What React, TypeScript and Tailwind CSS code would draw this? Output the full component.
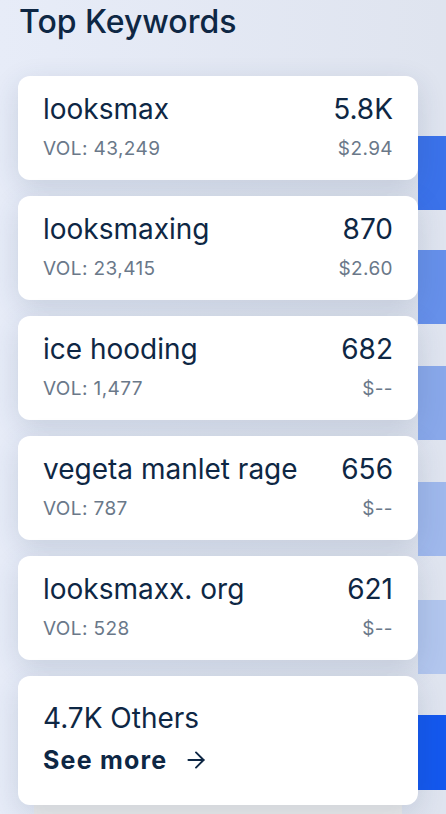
import { ArrowRight } from "lucide-react";

type Keyword = {
	term: string;
	score: string;
	vol: string;
	cpc: string;
};

const keywords: Keyword[] = [
	{ term: "looksmax", score: "5.8K", vol: "43,249", cpc: "$2.94" },
	{ term: "looksmaxing", score: "870", vol: "23,415", cpc: "$2.60" },
	{ term: "ice hooding", score: "682", vol: "1,477", cpc: "$--" },
	{ term: "vegeta manlet rage", score: "656", vol: "787", cpc: "$--" },
	{ term: "looksmaxx. org", score: "621", vol: "528", cpc: "$--" },
];

function KeywordCard({ k }: { k: Keyword }) {
	return (
		<div className="h-[104px] rounded-[12px] bg-white px-[25px] pt-[13px] shadow-[0_8px_28px_rgba(40,60,100,0.16)]">
			<div className="flex items-baseline justify-between text-[28px] leading-[40px] text-[#0e2744]">
				<span>{k.term}</span>
				<span>{k.score}</span>
			</div>
			<div className="mt-[8px] flex justify-between text-[19px] leading-[24px] tracking-[0.4px] text-[#6a7889]">
				<span>VOL: {k.vol}</span>
				<span>{k.cpc}</span>
			</div>
		</div>
	);
}

export default function App() {
	return (
		<div
			className="relative h-[814px] w-[446px] overflow-hidden bg-gradient-to-r from-[#e7ecf8] to-[#dfe4ef]"
			style={{ fontFamily: "Inter, 'Noto Sans', sans-serif" }}
		>
			{/* chart bars peeking out behind the cards */}
			<div className="absolute left-[418px] top-0 flex w-[28px] flex-col pt-[136px]">
				<div className="h-[74px] bg-[#3b72ea]" />
				<div className="mt-[40px] h-[74px] bg-[#6690ea]" />
				<div className="mt-[42px] h-[74px] bg-[#89a8ea]" />
				<div className="mt-[42px] h-[74px] bg-[#9fb8ec]" />
				<div className="mt-[44px] h-[74px] bg-[#b2c6ee]" />
				<div className="mt-[41px] h-[75px] bg-[#1458ee]" />
			</div>

			<div className="relative px-[18px] pr-[28px]">
				<h1 className="pt-[2px] pl-[1px] text-[32px] font-medium leading-[40px] text-[#0e2744]">
					Top Keywords
				</h1>
				<div className="mt-[34px] flex flex-col gap-[16px]">
					{keywords.map((k) => (
						<KeywordCard key={k.term} k={k} />
					))}
					<div className="relative h-[129px] rounded-[12px] bg-white px-[25px] pt-[24px] shadow-[0_8px_28px_rgba(40,60,100,0.16)]">
						<div className="text-[28px] leading-[36px] text-[#0e2744]">4.7K Others</div>
						<div className="mt-[8px] flex items-center gap-[16px] text-[25px] font-bold leading-[32px] tracking-[1.2px] text-[#0e2744]">
							See more
							<ArrowRight size={26} strokeWidth={1.75} />
						</div>
					</div>
					<div className="-mt-[16px] mx-[16px] h-[20px] bg-[#ececec]" />
				</div>
			</div>
		</div>
	);
}
